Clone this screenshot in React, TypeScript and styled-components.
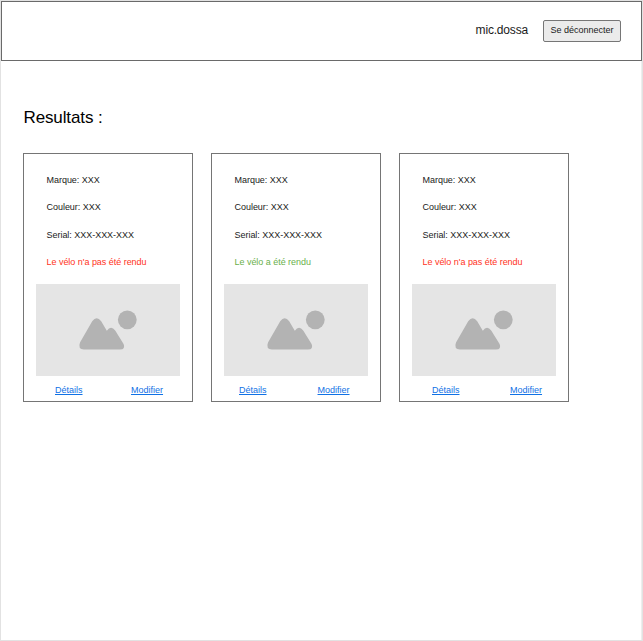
import React from "react";
import styled, { createGlobalStyle } from "styled-components";

const GlobalStyle = createGlobalStyle`
  * { box-sizing: border-box; }
  body {
    margin: 0;
    background: #fff;
    font-family: "Liberation Sans", Arial, sans-serif;
    color: #1a1a1a;
  }
`;

const Page = styled.div`
  display: flex;
  flex-direction: column;
  height: 641px;
  border: 1px solid #e2e2e2;
  overflow: hidden;
`;

const Header = styled.header`
  display: flex;
  flex: none;
  align-items: center;
  justify-content: flex-end;
  gap: 15px;
  height: 60px;
  padding-right: 20px;
  border: 1px solid #6a6a6a;
`;

const UserName = styled.span`
  font-size: 12px;
  line-height: 14px;
  letter-spacing: -0.18px;
  padding-bottom: 2px;
`;

const LogoutButton = styled.button`
  width: 78px;
  height: 22px;
  padding: 0 0 1px;
  border: 1px solid #767676;
  border-radius: 2px;
  background: #ebebeb;
  color: #1a1a1a;
  font: 9px/11px "Liberation Sans", Arial, sans-serif;
  white-space: nowrap;
`;

const Main = styled.main`
  flex: 1;
  padding: 47px 0 0 22px;
  border-right: 1px solid #eeeeee;
`;

const Title = styled.h1`
  margin: 0 0 25px;
  font-size: 17px;
  line-height: 20px;
  letter-spacing: -0.12px;
  padding-left: 0.5px;
  font-weight: 400;
  color: #000;
`;

const CardList = styled.div`
  display: flex;
  gap: 18px;
`;

const Card = styled.article`
  width: 170px;
  height: 249px;
  padding: 20px 12px 0;
  border: 1px solid #757575;
`;

const Details = styled.div`
  display: grid;
  grid-template-rows: repeat(4, 27.4px);
  padding-left: 10.5px;
  font-size: 9px;
  line-height: 12px;
  letter-spacing: -0.03px;
  white-space: nowrap;
`;

const Status = styled.span<{ $returned: boolean }>`
  color: ${(p) => (p.$returned ? "#6ab04c" : "#ff3222")};
`;

const Picture = styled.svg`
  display: block;
  width: 144px;
  height: 92px;
  background: #e5e5e5;
`;

const Actions = styled.nav<{ $start: number; $gap: number }>`
  display: flex;
  gap: ${(p) => p.$gap}px;
  padding: 8px 0 0 ${(p) => p.$start}px;
  font-size: 9px;
  line-height: 12px;
`;

const Link = styled.a`
  color: #1071e5;
  text-decoration: underline;
`;

const bikes = [
  { id: 1, returned: false, start: 19, gap: 48.5 },
  { id: 2, returned: true, start: 15, gap: 51 },
  { id: 3, returned: false, start: 20, gap: 50.5 },
];

function Placeholder() {
  return (
    <Picture viewBox="0 0 144 92" aria-hidden="true">
      <path
        fill="#b3b3b3"
        d="M44 58.5 L56.2 37.2 Q60.7 31.5 65.2 37.2 L70.8 46.8 Q75 40.8 79.2 46.6 L87.6 60 Q89.8 65.4 84 65.6 H48 Q41.5 65 44 58.5Z"
      />
      <circle cx="91.3" cy="35.8" r="9.4" fill="#b3b3b3" />
    </Picture>
  );
}

export default function App() {
  return (
    <>
      <GlobalStyle />
      <Page>
        <Header>
          <UserName>mic.dossa</UserName>
          <LogoutButton>Se déconnecter</LogoutButton>
        </Header>
        <Main>
          <Title>Resultats :</Title>
          <CardList>
            {bikes.map((bike) => (
              <Card key={bike.id}>
                <Details>
                  <span>Marque: XXX</span>
                  <span>Couleur: XXX</span>
                  <span>Serial: XXX-XXX-XXX</span>
                  <Status $returned={bike.returned}>
                    {bike.returned ? "Le vélo a été rendu" : "Le vélo n'a pas été rendu"}
                  </Status>
                </Details>
                <Placeholder />
                <Actions $start={bike.start} $gap={bike.gap}>
                  <Link href="#">Détails</Link>
                  <Link href="#">Modifier</Link>
                </Actions>
              </Card>
            ))}
          </CardList>
        </Main>
      </Page>
    </>
  );
}
